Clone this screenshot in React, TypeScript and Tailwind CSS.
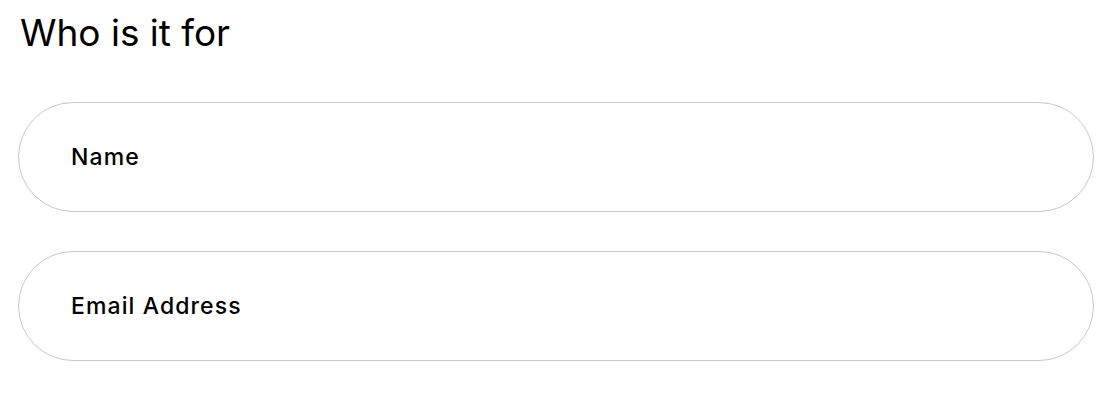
import React from "react";

export default function App() {
  return (
    <div className="bg-white w-[1110px] h-[400px] px-[18px] pt-[11px]" style={{ fontFamily: "Inter, 'Noto Sans', sans-serif" }}>
      <h2 className="text-[37px] leading-[44px] font-normal text-black pl-[2px]">Who is it for</h2>
      <div className="flex flex-col gap-[39px] mt-[47px] w-[1076px]">
        <input
          placeholder="Name"
          className="h-[110px] rounded-full border border-[#c8c8c8] px-[52px] text-[23px] tracking-[1.1px] font-medium text-black placeholder:text-black outline-none"
        />
        <input
          placeholder="Email Address"
          className="h-[110px] rounded-full border border-[#c8c8c8] px-[52px] text-[23px] tracking-[1.1px] font-medium text-black placeholder:text-black outline-none"
        />
      </div>
    </div>
  );
}
